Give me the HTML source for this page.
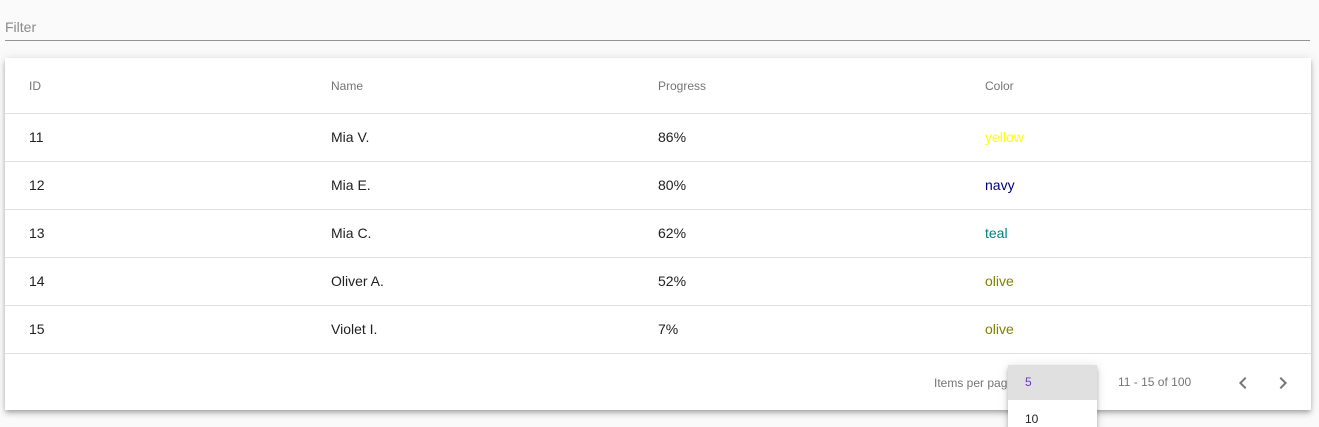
<!DOCTYPE html>
<html><head><style>
html,body{margin:0;height:427px;overflow:hidden}
body{background:#fafafa;font-family:"Liberation Sans",Arial,sans-serif;width:1319px;position:relative}
.filter{position:absolute;left:5px;top:19px;width:1305px;font-size:14px;color:#8a8a8a}
.uline{position:absolute;left:5px;top:40px;width:1305px;height:1px;background:#949494}
.card{position:absolute;left:5px;top:58px;width:1306px;height:352px;background:#fff;box-shadow:0 2px 4px -1px rgba(0,0,0,.2),0 4px 5px rgba(0,0,0,.14),0 1px 10px rgba(0,0,0,.12)}
.row{position:absolute;left:0;width:1306px;border-bottom:1px solid #e0e0e0;font-size:14px;color:#212121}
.row span{position:absolute}
.hdr{top:0;height:55px;font-size:12px;color:#757575}
.hdr span{top:21px}
.r span{top:15px}
.c1{left:24px}.c2{left:326px}.c3{left:653px}.c4{left:980px}
.foot{position:absolute;font-size:12px;color:#757575}
.menu{position:absolute;left:1008px;top:365px;width:89px;height:70px;background:#fff;box-shadow:0 2px 4px -1px rgba(0,0,0,.2),0 4px 5px rgba(0,0,0,.14),0 1px 10px rgba(0,0,0,.12);font-size:12px}
</style></head><body>
<div class="filter">Filter</div><div class="uline"></div>
<div class="card">
<div class="row hdr"><span class="c1">ID</span><span class="c2">Name</span><span class="c3">Progress</span><span class="c4">Color</span></div>
<div class="row r" style="top:56px;height:47px"><span class="c1">11</span><span class="c2">Mia V.</span><span class="c3">86%</span><span class="c4" style="color:yellow">yellow</span></div>
<div class="row r" style="top:104px;height:47px"><span class="c1">12</span><span class="c2">Mia E.</span><span class="c3">80%</span><span class="c4" style="color:navy">navy</span></div>
<div class="row r" style="top:152px;height:47px"><span class="c1">13</span><span class="c2">Mia C.</span><span class="c3">62%</span><span class="c4" style="color:teal">teal</span></div>
<div class="row r" style="top:200px;height:47px"><span class="c1">14</span><span class="c2">Oliver A.</span><span class="c3">52%</span><span class="c4" style="color:olive">olive</span></div>
<div class="row r" style="top:248px;height:47px"><span class="c1">15</span><span class="c2">Violet I.</span><span class="c3">7%</span><span class="c4" style="color:olive">olive</span></div>
</div>
<div class="foot" style="left:934px;top:376px">Items per page</div>
<div class="foot" style="left:1118px;top:375px">11 - 15 of 100</div>
<svg style="position:absolute;left:1231px;top:371px" width="24" height="24" viewBox="0 0 24 24"><path d="M15.4 7.4 14 6l-6 6 6 6 1.4-1.4L10.8 12z" fill="#757575"/></svg>
<svg style="position:absolute;left:1271px;top:371px" width="24" height="24" viewBox="0 0 24 24"><path d="M10 6 8.6 7.4 13.2 12l-4.6 4.6L10 18l6-6z" fill="#757575"/></svg>
<div class="menu"><div style="height:35px;background:#e0e0e0;color:#673ab7;padding-left:17px;line-height:35px">5</div><div style="color:#212121;padding-left:17px;line-height:38px">10</div></div>
</body></html>
